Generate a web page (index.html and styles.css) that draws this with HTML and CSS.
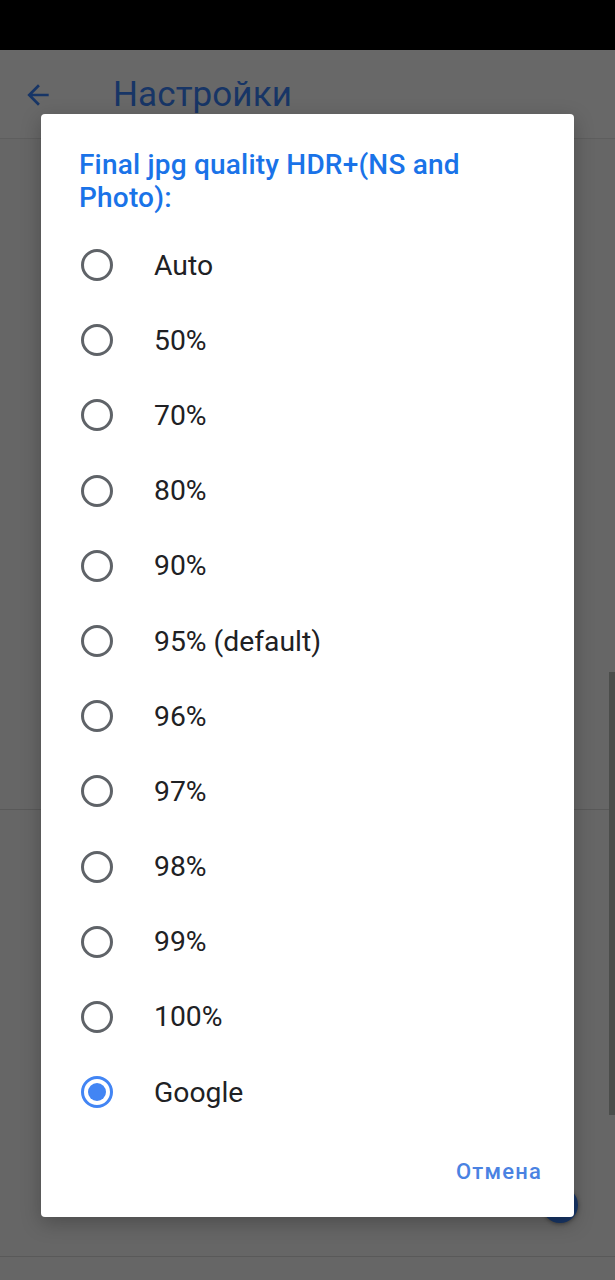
FILE: index.html
```html
<!DOCTYPE html>
<html lang="ru">
<head>
<meta charset="utf-8">
<link rel="stylesheet" href="styles.css">
</head>
<body>
<div class="screen">
  <div class="statusbar"></div>
  <header class="appbar">
    <svg class="back" viewBox="0 0 24 24" width="32" height="32"><path d="M20 11H7.83l5.59-5.59L12 4l-8 8 8 8 1.41-1.41L7.83 13H20v-2z" fill="#173566"/></svg>
    <h1 class="apptitle">Настройки</h1>
  </header>
  <main class="content">
    <div class="section s1"></div>
    <div class="section s2"></div>
    <div class="section s3"></div>
  </main>
  <div class="scrollbar"></div>
  <div class="fab"></div>

  <div class="dialog" role="dialog">
    <h2 class="dtitle">Final jpg quality HDR+(NS and Photo):</h2>
    <ul class="options">
      <li class="opt"><span class="radio"></span><span class="label">Auto</span></li>
      <li class="opt"><span class="radio"></span><span class="label">50%</span></li>
      <li class="opt"><span class="radio"></span><span class="label">70%</span></li>
      <li class="opt"><span class="radio"></span><span class="label">80%</span></li>
      <li class="opt"><span class="radio"></span><span class="label">90%</span></li>
      <li class="opt"><span class="radio"></span><span class="label">95% (default)</span></li>
      <li class="opt"><span class="radio"></span><span class="label">96%</span></li>
      <li class="opt"><span class="radio"></span><span class="label">97%</span></li>
      <li class="opt"><span class="radio"></span><span class="label">98%</span></li>
      <li class="opt"><span class="radio"></span><span class="label">99%</span></li>
      <li class="opt"><span class="radio"></span><span class="label">100%</span></li>
      <li class="opt"><span class="radio checked"></span><span class="label">Google</span></li>
    </ul>
    <div class="actions"><button class="btn">Отмена</button></div>
  </div>
</div>
</body>
</html>
```
FILE: styles.css
```css
* { box-sizing: border-box; }
html, body { margin: 0; padding: 0; }
body { background: #666666; font-family: Roboto, "Noto Sans", sans-serif; }
.screen { position: relative; width: 615px; height: 1280px; overflow: hidden; background: #666666; }
.statusbar { height: 50px; background: #000; }
.appbar { height: 89px; display: flex; align-items: center; border-bottom: 1px solid #5e5e5e; padding-left: 22px; background: #686868; }
.back { display: block; margin-top: 2px; }
.apptitle { margin: 0 0 0 59px; font-size: 35px; font-weight: 400; color: #173566; letter-spacing: 0.1px; }
.content { display: flex; flex-direction: column; }
.s1 { height: 671px; border-bottom: 1px solid #595959; }
.s2 { height: 447px; border-bottom: 1px solid #595959; }
.scrollbar { position: absolute; left: 609px; top: 672px; width: 6px; height: 443px; background: #4b4d4b; }
.fab { position: absolute; left: 542px; top: 1187px; width: 36px; height: 36px; border-radius: 50%; background: #173566; box-shadow: 0 1px 4px rgba(0,0,0,0.4); }
.dialog { position: absolute; left: 41px; top: 114px; width: 533px; height: 1103px; background: #fff; border-radius: 4px; padding: 34px 0 0 0; display: flex; flex-direction: column; box-shadow: 0 6px 20px rgba(0,0,0,0.25); }
.dtitle { margin: 0 40px 0 38px; max-width: 420px; font-size: 28px; line-height: 33px; font-weight: 500; color: #1a73e8; letter-spacing: 0.2px; }
.options { list-style: none; margin: 13.5px 0 0 0; padding: 0; }
.opt { height: 75.2px; display: flex; align-items: center; padding-left: 40px; }
.radio { width: 32px; height: 32px; border-radius: 50%; border: 3px solid #5f6368; flex: none; position: relative; }
.radio.checked { border-color: #4285f4; }
.radio.checked::after { content: ""; position: absolute; left: 4px; top: 4px; width: 18px; height: 18px; border-radius: 50%; background: #4285f4; }
.label { margin-left: 41px; font-size: 28.3px; color: #202124; }
.actions { display: flex; justify-content: flex-end; padding: 24px 32px 0 0; }
.btn { border: 0; background: none; font-family: Roboto, sans-serif; font-size: 22px; font-weight: 500; color: #4a82e2; letter-spacing: 1.2px; padding: 0; line-height: 36px; }
```
